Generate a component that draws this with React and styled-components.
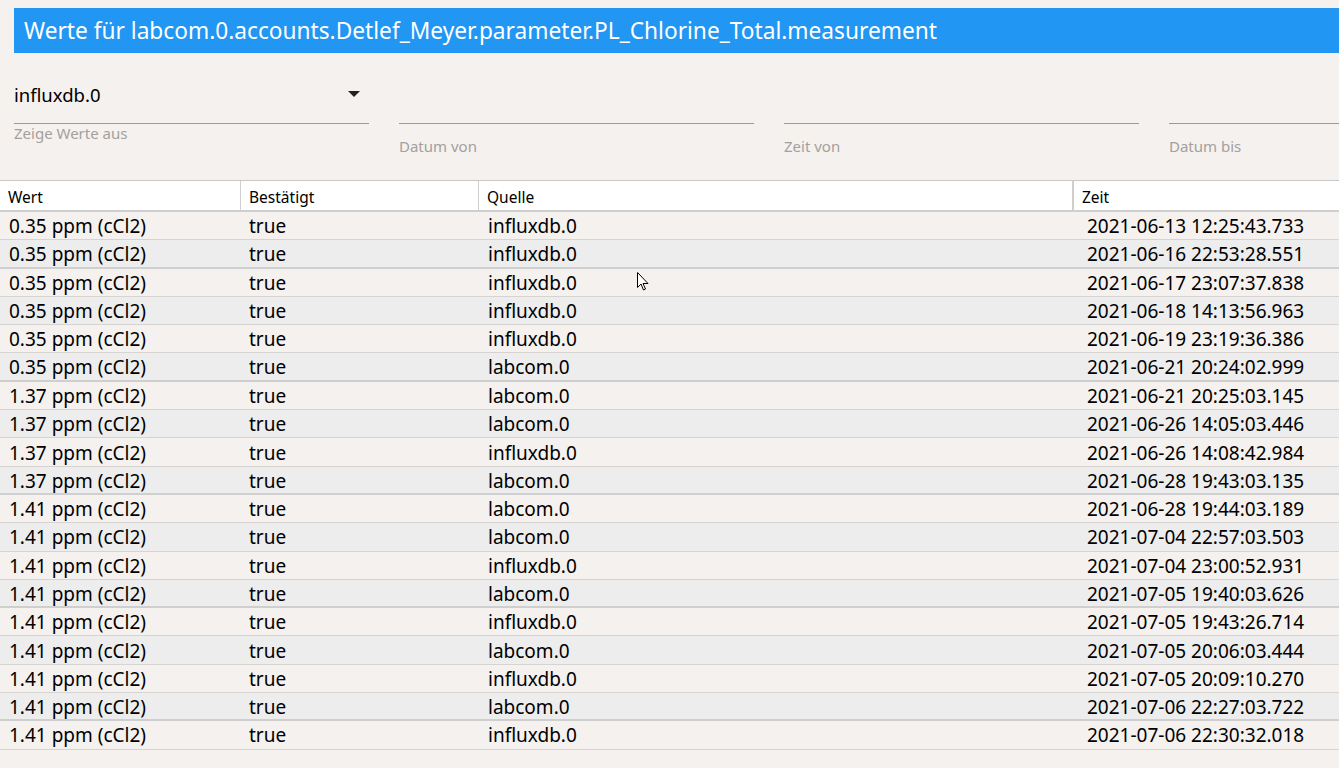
import React from "react";
import styled, { createGlobalStyle } from "styled-components";

const Global = createGlobalStyle`
  html, body { margin: 0; padding: 0; background: #f5f1ee; }
  body { font-family: "Noto Sans", "Open Sans", sans-serif; color: #000; overflow: hidden; }
`;

const Page = styled.div`
  position: relative;
  width: 1339px;
  height: 768px;
  padding-top: 8px;
  box-sizing: border-box;
  overflow: hidden;
`;

const TitleBar = styled.div`
  margin-left: 14px;
  height: 45px;
  background: #2196f3;
  color: #fff;
  display: flex;
  align-items: center;
  padding-left: 10px;
  font-size: 22.7px;
  white-space: nowrap;
`;

const Filters = styled.div`
  display: flex;
  gap: 30px;
  padding-left: 14px;
  margin-top: 23px;
  height: 104px;
`;

const Field = styled.div`
  width: 355px;
  flex-shrink: 0;
  display: flex;
  flex-direction: column;
`;

const FieldInput = styled.div`
  height: 48px;
  border-bottom: 1px solid #9e9a98;
  display: flex;
  align-items: flex-start;
  justify-content: space-between;
  font-size: 18.5px;
  line-height: 24px;
  padding: 7px 9px 0 0;
  box-sizing: border-box;
`;

const Arrow = styled.span`
  width: 0;
  height: 0;
  border-left: 6px solid transparent;
  border-right: 6px solid transparent;
  border-top: 6px solid #222;
  margin-top: 8px;
`;

const FieldLabel = styled.div`
  font-size: 15px;
  color: #a3a09e;
  margin-top: ${(p) => (p.$low ? "13px" : "0px")};
  line-height: 18px;
  white-space: nowrap;
`;

const Table = styled.div`
  border-top: 1px solid #c8c8c8;
`;

const HeadRow = styled.div`
  display: grid;
  grid-template-columns: 240px 238px 594px 1fr;
  height: 29px;
  background: #fff;
  border-bottom: 2px solid #cfcfcf;
`;

const HeadCell = styled.div`
  font-size: 15.5px;
  display: flex;
  align-items: center;
  padding-left: ${(p) => p.$pl || 8}px;
  border-left: ${(p) => (p.$bw ? `${p.$bw}px solid #cfcfcf` : "none")};
  padding-top: 2px;
`;

const Row = styled.div`
  display: grid;
  grid-template-columns: 240px 238px 594px 1fr;
  height: 28.3px;
  box-sizing: border-box;
  background: ${(p) => (p.$alt ? "#ededed" : "#f5f1ee")};
  border-bottom: ${(p) => (p.$thick ? "2px solid #cfcfcf" : "1px solid #d6d3d1")};
`;

const Cell = styled.div`
  font-size: 19px;
  display: flex;
  align-items: center;
  padding-left: ${(p) => p.$pl}px;
  padding-top: 1px;
  white-space: nowrap;
`;

const Cursor = styled.svg`
  position: absolute;
  left: 637px;
  top: 272px;
`;

const data = [
  ["0.35 ppm (cCl2)", "influxdb.0", "2021-06-13 12:25:43.733"],
  ["0.35 ppm (cCl2)", "influxdb.0", "2021-06-16 22:53:28.551"],
  ["0.35 ppm (cCl2)", "influxdb.0", "2021-06-17 23:07:37.838"],
  ["0.35 ppm (cCl2)", "influxdb.0", "2021-06-18 14:13:56.963"],
  ["0.35 ppm (cCl2)", "influxdb.0", "2021-06-19 23:19:36.386"],
  ["0.35 ppm (cCl2)", "labcom.0", "2021-06-21 20:24:02.999"],
  ["1.37 ppm (cCl2)", "labcom.0", "2021-06-21 20:25:03.145"],
  ["1.37 ppm (cCl2)", "labcom.0", "2021-06-26 14:05:03.446"],
  ["1.37 ppm (cCl2)", "influxdb.0", "2021-06-26 14:08:42.984"],
  ["1.37 ppm (cCl2)", "labcom.0", "2021-06-28 19:43:03.135"],
  ["1.41 ppm (cCl2)", "labcom.0", "2021-06-28 19:44:03.189"],
  ["1.41 ppm (cCl2)", "labcom.0", "2021-07-04 22:57:03.503"],
  ["1.41 ppm (cCl2)", "influxdb.0", "2021-07-04 23:00:52.931"],
  ["1.41 ppm (cCl2)", "labcom.0", "2021-07-05 19:40:03.626"],
  ["1.41 ppm (cCl2)", "influxdb.0", "2021-07-05 19:43:26.714"],
  ["1.41 ppm (cCl2)", "labcom.0", "2021-07-05 20:06:03.444"],
  ["1.41 ppm (cCl2)", "influxdb.0", "2021-07-05 20:09:10.270"],
  ["1.41 ppm (cCl2)", "labcom.0", "2021-07-06 22:27:03.722"],
  ["1.41 ppm (cCl2)", "influxdb.0", "2021-07-06 22:30:32.018"],
];

export default function App() {
  return (
    <Page>
      <Global />
      <TitleBar>Werte für labcom.0.accounts.Detlef_Meyer.parameter.PL_Chlorine_Total.measurement</TitleBar>
      <Filters>
        <Field>
          <FieldInput>
            influxdb.0
            <Arrow />
          </FieldInput>
          <FieldLabel>Zeige Werte aus</FieldLabel>
        </Field>
        <Field>
          <FieldInput />
          <FieldLabel $low>Datum von</FieldLabel>
        </Field>
        <Field>
          <FieldInput />
          <FieldLabel $low>Zeit von</FieldLabel>
        </Field>
        <Field>
          <FieldInput />
          <FieldLabel $low>Datum bis</FieldLabel>
        </Field>
      </Filters>
      <Table>
        <HeadRow>
          <HeadCell>Wert</HeadCell>
          <HeadCell $bw={1}>Bestätigt</HeadCell>
          <HeadCell $bw={1}>Quelle</HeadCell>
          <HeadCell $bw={2}>Zeit</HeadCell>
        </HeadRow>
        {data.map((r, i) => (
          <Row key={i} $alt={i % 2 === 1} $thick={i % 4 === 1}>
            <Cell $pl={9}>{r[0]}</Cell>
            <Cell $pl={9}>true</Cell>
            <Cell $pl={10}>{r[1]}</Cell>
            <Cell $pl={15}>{r[2]}</Cell>
          </Row>
        ))}
      </Table>
      <Cursor width="12" height="19" viewBox="0 0 12 19">
        <path d="M0.5 0.5 L0.5 15.5 L4 12 L6.5 18 L8.5 17 L6 11.5 L11 11.5 Z" fill="#fff" stroke="#000" strokeWidth="1" />
      </Cursor>
    </Page>
  );
}
